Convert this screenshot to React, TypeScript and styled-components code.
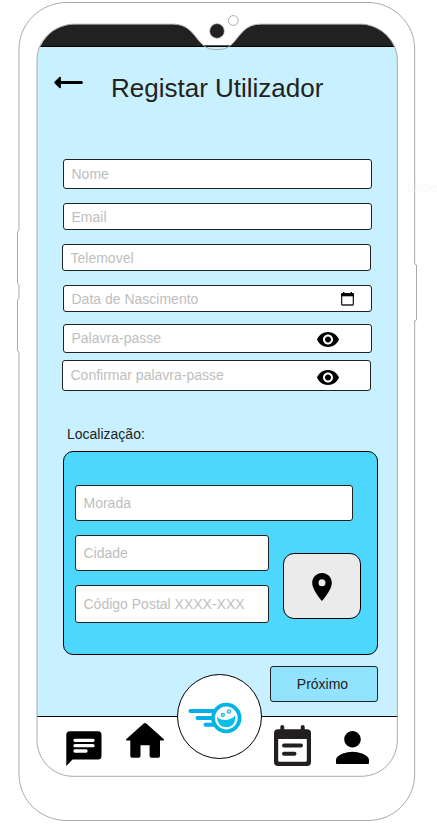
import React from "react";
import styled, { createGlobalStyle } from "styled-components";

const GlobalStyle = createGlobalStyle`
  html, body { margin: 0; background: #fff; overflow: hidden; }
  *, *::before, *::after { box-sizing: border-box; }
  body { font-family: "Liberation Sans", Arial, sans-serif; font-size: 14px; color: #222; }
  svg { display: block; flex: none; }
`;

const Stage = styled.div`
  position: relative;
  width: 437px;
  height: 835px;
  padding: 24px 0 0 37px;
  overflow: hidden;
`;

const Screen = styled.main`
  display: flex;
  flex-direction: column;
  width: 361px;
  height: 753px;
  border-radius: 38px;
  overflow: hidden;
  background: #c8f0fe;
`;

const StatusBar = styled.div`
  flex: none;
  height: 23px;
  background: #212121;
  border-bottom: 1px solid #000;
`;

const Header = styled.header`
  display: flex;
  flex: none;
  align-items: flex-start;
  height: 112px;
  padding: 26px 0 0 17px;
`;

const BackButton = styled.button`
  width: 29px;
  margin: 3px 28px 0 0;
  padding: 0;
  border: 0;
  background: none;
`;

const Title = styled.h1`
  margin: 0;
  font-size: 26px;
  font-weight: 400;
  line-height: 30px;
  white-space: nowrap;
`;

const Form = styled.form`
  display: flex;
  flex: none;
  flex-direction: column;
  height: 557px;
  padding-left: 26px;
`;

const Field = styled.label<{ $w: number; $h: number; $gap?: number; $shift?: number; $iconEnd?: number; $raise?: number }>`
  display: flex;
  flex: none;
  align-items: center;
  justify-content: space-between;
  width: ${(p) => p.$w}px;
  height: ${(p) => p.$h}px;
  margin: ${(p) => p.$gap ?? 0}px 0 0 ${(p) => p.$shift ?? 0}px;
  padding: 0 ${(p) => p.$iconEnd ?? 8}px ${(p) => p.$raise ?? 0}px 7.5px;
  border: 1px solid #222;
  border-radius: 3px;
  background: #fff;
  color: #bebebe;
  white-space: nowrap;
`;

const EyeToggle = styled.span<{ $drop: number }>`
  margin-top: ${(p) => p.$drop}px;
`;

const SectionLabel = styled.h2`
  margin: 35px 0 9px 4px;
  font-size: 14px;
  font-weight: 400;
  line-height: 16px;
`;

const LocationPanel = styled.section`
  display: flex;
  flex: none;
  flex-direction: column;
  width: 315px;
  height: 204px;
  padding: 33px 0 0 11px;
  border: 1px solid #000;
  border-radius: 10px;
  background: #4dd7fd;
`;

const LocationRow = styled.div`
  display: flex;
  gap: 14px;
`;

const PinButton = styled.button`
  display: flex;
  align-items: center;
  justify-content: center;
  width: 78px;
  height: 66px;
  margin-top: 32px;
  padding: 1px 0 0;
  border: 1px solid #000;
  border-radius: 11px;
  background: #ebebeb;
`;

const NextButton = styled.button`
  width: 108px;
  height: 36px;
  margin: 11px 0 0 207px;
  padding: 0 3px 0 0;
  border: 1px solid #222;
  border-radius: 3px;
  background: #92e3fd;
  color: #222;
  font: inherit;
`;

const NavBar = styled.nav`
  display: flex;
  flex: none;
  align-items: flex-start;
  height: 61px;
  padding-left: 29px;
  border-top: 1px solid #000;
  background: #fff;
`;

const NavItem = styled.a<{ $top: number; $left?: number }>`
  flex: none;
  margin: ${(p) => p.$top}px 0 0 ${(p) => p.$left ?? 0}px;
`;

const LogoButton = styled.a`
  display: flex;
  flex: none;
  align-items: center;
  justify-content: center;
  width: 85px;
  height: 85px;
  margin: -43px 0 0 13px;
  padding: 3px 10px 0 0;
  border: 1px solid #000;
  border-radius: 50%;
  background: #fff;
`;

const Frame = styled.svg`
  position: absolute;
  inset: 0;
  pointer-events: none;
`;

const FaintLabel = styled.span`
  position: absolute;
  left: 407px;
  top: 179px;
  color: #fafafa;
  line-height: 16px;
`;

const DeviceFrame = () => (
  <Frame width="437" height="835" viewBox="0 0 437 835" fill="none" stroke="#aaa" strokeWidth="1">
    <path d="M174 20V24.5C188 24.5 193 34 200 42L203 45.2H231L234 42C241 34 246 24.5 260 24.5V20Z" fill="#fff" stroke="none" />
    <path d="M72 24.2H174C188 24.2 193 34 200 42C206 49 211 49.5 217 49.5S228 49 234 42C241 34 246 24.2 260 24.2H363C383 26 397.3 43 397.3 60V740C397.3 760 382 776.3 361 776.3H73C53 776.3 37 760 37 740V60C37 42 51 26 72 24.2Z" />
    <path d="M67 2.5H368C394 2.5 414.7 24 414.7 49V264L416.5 265V320L414.7 321V774C414.7 800 394 820.5 368 820.5H67C40 820.5 19 800 19 774V352L17.5 351V300L19 298V285L17.5 283V232L19 230V49C19 24 40 2.5 67 2.5Z" />
    <circle cx="233.3" cy="20.5" r="4.9" />
    <circle cx="217" cy="31" r="7.2" fill="#222" stroke="#888" strokeWidth=".6" />
  </Frame>
);

const ArrowIcon = () => (
  <svg width="29" height="13" viewBox="0 0 29 13">
    <path d="M7 6.5H27.3" stroke="#000" strokeWidth="3.2" strokeLinecap="round" />
    <path d="M1.200 6.500L6 1.700V11.300Z" fill="#000" stroke="#000" strokeWidth="1.800" strokeLinejoin="round" />
  </svg>
);

const DateIcon = () => (
  <svg width="13" height="14" viewBox="0 0 13 14">
    <path d="M2.700 0V2M10.300 0V2" stroke="#000" strokeWidth="1.300" />
    <rect x=".65" y="1.700" width="11.700" height="11.300" rx=".8" fill="none" stroke="#222" strokeWidth="1.300" />
    <path d="M.3 1.300H12.700V4.300H.3Z" fill="#000" />
  </svg>
);

const EyeIcon = () => (
  <svg width="22" height="15" viewBox="1 4.5 22 15">
    <path d="M12 4.500C7 4.500 2.730 7.610 1 12c1.730 4.390 6 7.500 11 7.500s9.270-3.110 11-7.500c-1.730-4.390-6-7.500-11-7.500zM12 17c-2.760 0-5-2.240-5-5s2.240-5 5-5 5 2.240 5 5-2.240 5-5 5zm0-8c-1.660 0-3 1.340-3 3s1.340 3 3 3 3-1.340 3-3-1.340-3-3-3z" />
  </svg>
);

const PinIcon = () => (
  <svg width="20" height="28" viewBox="5 2 14 20">
    <path d="M12 2C8.130 2 5 5.130 5 9c0 5.250 7 13 7 13s7-7.750 7-13c0-3.870-3.130-7-7-7zm0 9.500a2.500 2.500 0 0 1 0-5 2.500 2.500 0 0 1 0 5z" />
  </svg>
);

const ChatIcon = () => (
  <svg width="36" height="36" viewBox="0 0 36 36">
    <path d="M4 .3H32Q35.500.3 35.500 4V25Q35.500 28.500 32 28.500H6.500L.3 35V4Q.3.3 4 .3Z" />
    <path d="M9 9.300H27M9 14.700H27M9 20H20" stroke="#fff" strokeWidth="3.300" strokeLinecap="round" />
  </svg>
);

const HomeIcon = () => (
  <svg width="38" height="35" viewBox="0 0 38 35">
    <path d="M17.400.7Q19-.5 20.600.7L37.600 16Q38.600 17.500 37 17.500H34V33Q34 34.700 32.300 34.700H25.300Q23.600 34.700 23.600 33V22.300H14.500V33Q14.500 34.700 12.800 34.700H6Q4.300 34.700 4.300 33V17.500H1Q-.6 17.500.4 16Z" />
  </svg>
);

const AgendaIcon = () => (
  <svg width="37" height="41" viewBox="0 0 37 41">
    <path fill="#231f20" fillRule="evenodd" d="M8.300 0Q10.300 0 10.300 2V4.300H26.700V2Q26.700 0 28.700 0T30.700 2V4.300H33Q37 4.300 37 8.300V37Q37 41 33 41H4Q0 41 0 37V8.300Q0 4.300 4 4.300H6.300V2Q6.300 0 8.300 0ZM4.200 14V35.500Q4.200 36.800 5.500 36.800H31.500Q32.800 36.800 32.800 35.500V14Z" />
    <path d="M10 20.500H27M10 28.700H20.500" stroke="#231f20" strokeWidth="4" strokeLinecap="round" />
  </svg>
);

const PersonIcon = () => (
  <svg width="33" height="33" viewBox="4 4 16 16">
    <path d="M12 12c2.210 0 4-1.790 4-4s-1.790-4-4-4-4 1.790-4 4 1.790 4 4 4zm0 2c-2.670 0-8 1.340-8 4v1.500q0 .5.500.5h15q.5 0 .5-.5V18c0-2.660-5.330-4-8-4z" />
  </svg>
);

const LogoIcon = () => (
  <svg width="54" height="34" viewBox="0 0 54 34">
    <g stroke="#00b0ea" strokeLinecap="round" fill="none">
      <path d="M2.500 10H26M9.500 17H25M17.500 23.700H28" strokeWidth="4" />
      <circle cx="38.300" cy="17" r="13.300" fill="#fff" stroke="#00b4e6" strokeWidth="3.800" />
    </g>
    <path d="M29 16C34 20.500 42 19.800 47.300 14.500C48 22 44 26.300 38.300 26.300S29.500 22.300 29 16Z" fill="#08c0ea" />
    <g fill="#d8f7ff" stroke="#18bfe6" strokeWidth="1.300">
      <circle cx="34.900" cy="14" r="1.500" />
      <circle cx="40.900" cy="10.400" r="1.600" />
    </g>
  </svg>
);

export default function App() {
  return (
    <>
      <GlobalStyle />
      <Stage>
        <Screen>
          <StatusBar />
          <Header>
            <BackButton type="button" aria-label="Voltar"><ArrowIcon /></BackButton>
            <Title>Registar Utilizador</Title>
          </Header>
          <Form>
            <Field $w={309} $h={30}>Nome</Field>
            <Field $w={309} $h={27} $gap={14}>Email</Field>
            <Field $w={309} $h={27} $gap={14} $shift={-1}>Telemovel</Field>
            <Field $w={309} $h={27} $gap={14} $iconEnd={17}>Data de Nascimento<DateIcon /></Field>
            <Field $w={309} $h={29} $gap={12} $iconEnd={32} $raise={2}>
              Palavra-passe<EyeToggle $drop={4}><EyeIcon /></EyeToggle>
            </Field>
            <Field $w={309} $h={31} $gap={7} $shift={-1} $iconEnd={31} $raise={2}>
              Confirmar palavra-passe<EyeToggle $drop={6}><EyeIcon /></EyeToggle>
            </Field>
            <SectionLabel>Localização:</SectionLabel>
            <LocationPanel>
              <Field $w={278} $h={36}>Morada</Field>
              <LocationRow>
                <div>
                  <Field $w={194} $h={36} $gap={14}>Cidade</Field>
                  <Field $w={194} $h={38} $gap={14}>Código Postal XXXX-XXX</Field>
                </div>
                <PinButton type="button" aria-label="Escolher no mapa"><PinIcon /></PinButton>
              </LocationRow>
            </LocationPanel>
            <NextButton type="button">Próximo</NextButton>
          </Form>
          <NavBar>
            <NavItem $top={14}><ChatIcon /></NavItem>
            <NavItem $top={6} $left={24}><HomeIcon /></NavItem>
            <LogoButton><LogoIcon /></LogoButton>
            <NavItem $top={8} $left={12}><AgendaIcon /></NavItem>
            <NavItem $top={14} $left={25}><PersonIcon /></NavItem>
          </NavBar>
        </Screen>
        <DeviceFrame />
        <FaintLabel>Label</FaintLabel>
      </Stage>
    </>
  );
}
